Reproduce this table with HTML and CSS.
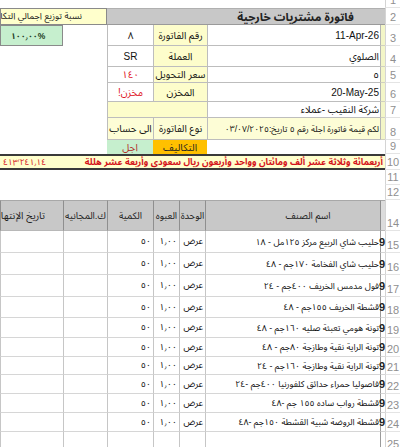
FILE: index.html
```html
<!DOCTYPE html>
<html lang="ar" dir="rtl">
<head>
<meta charset="utf-8">
<title>فاتورة مشتريات خارجية</title>
<link rel="stylesheet" href="styles.css">
</head>
<body>
<div class="sheet">
  <div class="row r1"><div class="rh">1</div><div class="c rest"></div></div>

  <div class="row r2">
    <div class="rh">2</div>
    <div class="c strip gray"></div>
    <div class="c w173 gray title">فاتورة مشتريات خارجية</div>
    <div class="c w100 gray"></div>
    <div class="c w107 ylw ratio">نسبة توزيع اجمالي التكاليف</div>
  </div>

  <div class="row r3">
    <div class="rh">3</div>
    <div class="c strip sy"></div>
    <div class="c w173 val"><span dir="ltr">11-Apr-26</span></div>
    <div class="c w54 lbl">رقم الفاتورة</div>
    <div class="c w46 mid">٨</div>
    <div class="c w44"></div>
    <div class="c w63 green"><span dir="ltr">١٠٠٫٠٠%</span></div>
  </div>

  <div class="row r4">
    <div class="rh">4</div>
    <div class="c strip sy"></div>
    <div class="c w173 val">الصلوي</div>
    <div class="c w54 lbl">العملة</div>
    <div class="c w46 mid">SR</div>
    <div class="c w107"></div>
  </div>

  <div class="row r5">
    <div class="rh">5</div>
    <div class="c strip sy"></div>
    <div class="c w173 val">٥</div>
    <div class="c w54 lbl">سعر التحويل</div>
    <div class="c w46 mid red">١٤٠</div>
    <div class="c w107"></div>
  </div>

  <div class="row r6">
    <div class="rh">6</div>
    <div class="c strip sy"></div>
    <div class="c w173 val"><span dir="ltr">20-May-25</span></div>
    <div class="c w54 lbl">المخزن</div>
    <div class="c w46 mid red">مخزن!</div>
    <div class="c w107"></div>
  </div>

  <div class="row r7">
    <div class="rh">7</div>
    <div class="c strip sy"></div>
    <div class="c w173 val">شركة النقيب -عملاء</div>
    <div class="c w100 lbl"></div>
    <div class="c w107"></div>
  </div>

  <div class="row r8">
    <div class="rh">8</div>
    <div class="c strip sy"></div>
    <div class="c w173 val ly small">لكم قيمة فاتورة اجلة رقم ٥ تاريخ:<span dir="ltr">٠٣/٠٧/٢٠٢٥</span></div>
    <div class="c w54 lbl ly">نوع الفاتورة</div>
    <div class="c w46 mid ly">الى حساب</div>
    <div class="c w107"></div>
  </div>

  <div class="row r9">
    <div class="rh">9</div>
    <div class="c strip"></div>
    <div class="c w173"></div>
    <div class="c w54 orange">التكاليف</div>
    <div class="c w46 gcell">اجل</div>
    <div class="c w107"></div>
  </div>

  <div class="row r10">
    <div class="rh">10</div>
    <div class="c total">
      <span class="words">أربعمائة وثلاثة عشر ألف ومائتان وواحد وأربعون ريال سعودي وأربعة عشر هللة</span>
      <span class="sum" dir="ltr">٤١٣٬٢٤١٫١٤</span>
    </div>
  </div>

  <div class="row r11"><div class="rh">11</div><div class="c rest"></div></div>
  <div class="row r12"><div class="rh">12</div><div class="c rest"></div></div>

  <div class="row r14 head">
    <div class="rh">14</div>
    <div class="c strip"></div>
    <div class="c w175 hname">اسم الصنف</div>
    <div class="c w26">الوحدة</div>
    <div class="c w26">العبوه</div>
    <div class="c w46">الكمية</div>
    <div class="c w44">ك.المجانيه</div>
    <div class="c w63 exp"><span class="tx">تاريخ الإنتهاء</span></div>
  </div>

  <div class="row rd r15">
    <div class="rh">15</div>
    <div class="c strip nine">9</div>
    <div class="c w175 name">حليب شاي الربيع مركز ١٢٥مل - ١٨</div>
    <div class="c w26 num">عرض</div>
    <div class="c w26 num">١٫٠٠</div>
    <div class="c w46 num">٥٠</div>
    <div class="c w44"></div>
    <div class="c w63"></div>
  </div>
  <div class="row rd r16">
    <div class="rh">16</div>
    <div class="c strip nine">9</div>
    <div class="c w175 name">حليب شاي الفخامة ١٧٠جم - ٤٨</div>
    <div class="c w26 num">عرض</div>
    <div class="c w26 num">١٫٠٠</div>
    <div class="c w46 num">٥٠</div>
    <div class="c w44"></div>
    <div class="c w63"></div>
  </div>
  <div class="row rd r17">
    <div class="rh">17</div>
    <div class="c strip nine">9</div>
    <div class="c w175 name">فول مدمس الخريف ٤٠٠جم - ٢٤</div>
    <div class="c w26 num">عرض</div>
    <div class="c w26 num">١٫٠٠</div>
    <div class="c w46 num">٥٠</div>
    <div class="c w44"></div>
    <div class="c w63"></div>
  </div>
  <div class="row rd r18">
    <div class="rh">18</div>
    <div class="c strip nine">9</div>
    <div class="c w175 name">قشطة الخريف ١٥٥جم - ٤٨</div>
    <div class="c w26 num">عرض</div>
    <div class="c w26 num">١٫٠٠</div>
    <div class="c w46 num">٥٠</div>
    <div class="c w44"></div>
    <div class="c w63"></div>
  </div>
  <div class="row rd r19">
    <div class="rh">19</div>
    <div class="c strip nine">9</div>
    <div class="c w175 name">تونة هومي تعبئة صليه ١٦٠جم - ٤٨</div>
    <div class="c w26 num">عرض</div>
    <div class="c w26 num">١٫٠٠</div>
    <div class="c w46 num">٥٠</div>
    <div class="c w44"></div>
    <div class="c w63"></div>
  </div>
  <div class="row rd r20">
    <div class="rh">20</div>
    <div class="c strip nine">9</div>
    <div class="c w175 name">تونة الراية نقية وطازجة ٨٠جم - ٤٨</div>
    <div class="c w26 num">عرض</div>
    <div class="c w26 num">١٫٠٠</div>
    <div class="c w46 num">٥٠</div>
    <div class="c w44"></div>
    <div class="c w63"></div>
  </div>
  <div class="row rd r21">
    <div class="rh">21</div>
    <div class="c strip nine">9</div>
    <div class="c w175 name">تونة الراية نقية وطازجة ١٦٠جم - ٢٤</div>
    <div class="c w26 num">عرض</div>
    <div class="c w26 num">١٫٠٠</div>
    <div class="c w46 num">٥٠</div>
    <div class="c w44"></div>
    <div class="c w63"></div>
  </div>
  <div class="row rd r22">
    <div class="rh">22</div>
    <div class="c strip nine">9</div>
    <div class="c w175 name">فاصوليا حمراء حدائق كلفورنيا ٤٠٠جم -٢٤</div>
    <div class="c w26 num">عرض</div>
    <div class="c w26 num">١٫٠٠</div>
    <div class="c w46 num">٥٠</div>
    <div class="c w44"></div>
    <div class="c w63"></div>
  </div>
  <div class="row rd r23">
    <div class="rh">23</div>
    <div class="c strip nine">9</div>
    <div class="c w175 name">قشطة رواب ساده ١٥٥ جم -٤٨</div>
    <div class="c w26 num">عرض</div>
    <div class="c w26 num">١٫٠٠</div>
    <div class="c w46 num">٥٠</div>
    <div class="c w44"></div>
    <div class="c w63"></div>
  </div>
  <div class="row rd r24">
    <div class="rh">24</div>
    <div class="c strip nine">9</div>
    <div class="c w175 name">قشطة الروضة شبية القشطة ١٥٠جم -٤٨</div>
    <div class="c w26 num">عرض</div>
    <div class="c w26 num">١٫٠٠</div>
    <div class="c w46 num">٥٠</div>
    <div class="c w44"></div>
    <div class="c w63"></div>
  </div>
  <div class="row rd r25">
    <div class="rh">25</div>
    <div class="c strip"></div>
    <div class="c w175"></div>
    <div class="c w26"></div>
    <div class="c w26"></div>
    <div class="c w46"></div>
    <div class="c w44"></div>
    <div class="c w63"></div>
  </div>
</div>
</body>
</html>
```

FILE: styles.css
```css
* { box-sizing: border-box; margin: 0; padding: 0; }

html, body {
  width: 400px;
  height: 447px;
  overflow: hidden;
  background: #fff;
}

body {
  font-family: "Liberation Sans", "Noto Sans Arabic", "Noto Naskh Arabic", "DejaVu Sans Condensed", "DejaVu Sans", sans-serif;
  font-size: 9.5px;
  color: #111;
}

.sheet {
  direction: rtl;
  display: flex;
  flex-direction: column;
  width: 400px;
}

.row { display: flex; flex: none; }

.r1 { height: 8px; }
.r2 { height: 17px; }
.r3 { height: 21px; }
.r4 { height: 21px; }
.r5 { height: 16px; }
.r6 { height: 19px; }
.r7 { height: 16px; }
.r8 { height: 22px; }
.r9 { height: 14px; }
.r10 { height: 16px; }
.r11 { height: 15px; }
.r12 { height: 15px; }
.r14 { height: 31px; }
.r15, .r16, .r17 { height: 22px; }
.r18 { height: 21px; }
.r19 { height: 20px; }
.r20, .r22, .r23, .r24 { height: 19px; }
.r21 { height: 18px; }
.r25 { height: 20px; }

/* row header column */
.rh {
  width: 15px;
  flex: none;
  display: flex;
  align-items: flex-end;
  justify-content: center;
  padding-bottom: 1px;
  font-size: 11px;
  line-height: 11px;
  color: #8f8f8f;
  border-bottom: 1px solid #e4e4e4;
  border-left: 1px solid #d4d4d4;
  background: #fff;
  overflow: hidden;
}

/* cells */
.c {
  flex: none;
  height: 100%;
  display: flex;
  align-items: center;
  overflow: hidden;
  white-space: nowrap;
}

.tx { flex: none; }

.rest { flex: 1; }

.strip { width: 5px; }
.w173 { width: 173px; }
.w175 { width: 175px; }
.w100 { width: 100px; }
.w107 { width: 107px; }
.w54 { width: 54px; }
.w46 { width: 46px; }
.w44 { width: 44px; }
.w63 { width: 63px; }
.w26 { width: 26px; }

.gray { background: #c8c8c8; }

.title {
  justify-content: center;
  padding-left: 4px;
  font-weight: bold;
  font-size: 11.5px;
  color: #222;
}

.r2 .gray { border-top: 1px solid #b0b0b0; border-bottom: 1px solid #9a9a9a; }

.ylw { background: #ffffcc; }

.ratio {
  border: 1px solid #8a8a8a;
  padding-right: 24px;
  font-size: 9px;
  color: #222;
}

.sy {
  background: #f3f6c8;
  border-left: 1px solid #b5b5b5;
  border-bottom: 1px solid #d0d0c0;
}

.val {
  padding-right: 1px;
  font-size: 10px;
  border-bottom: 1px solid #bdbdbd;
  border-left: 1px solid #bdbdbd;
  background: #fff;
}

.val.small { font-size: 8.6px; }

.lbl {
  justify-content: center;
  font-size: 10px;
  background: #fdfdcb;
  border-bottom: 1px solid #bdbdbd;
  border-left: 1px solid #bdbdbd;
}

.mid {
  justify-content: center;
  font-size: 10px;
  background: #fff;
  border-bottom: 1px solid #bdbdbd;
  border-left: 1px solid #bdbdbd;
}

.ly { background: #fdfdd6; }

.red { color: #e0141e; }

.green {
  background: #c6efce;
  border: 1px solid #8a8a8a;
  justify-content: flex-end;
  padding-left: 10px;
  font-size: 8.5px;
  font-weight: bold;
  color: #1d3b1d;
}

.orange {
  justify-content: center;
  background: #ffc000;
  font-size: 10px;
  color: #222;
}

.gcell {
  justify-content: center;
  background: #c6efce;
  font-size: 10px;
  color: #b2302a;
}

.total {
  width: 385px;
  background: #ffffcc;
  border-top: 2px solid #3a3a3a;
  border-bottom: 2px solid #3a3a3a;
  justify-content: space-between;
  padding: 0 2px 0 3px;
  color: #d3121a;
}

.words {
  font-weight: bold;
  font-size: 9px;
}

.sum { font-size: 8.5px; }

/* table header */
.head .c {
  background: #c8c8c8;
  justify-content: center;
  border-left: 1px solid #8f8f8f;
  border-top: 1px solid #a8a8a8;
  border-bottom: 1px solid #b8b8b8;
  color: #222;
}

.head .strip { background: #dcdcdc; }

.head .hname { padding-left: 30px; }

.head .exp { justify-content: flex-start; padding-right: 18px; font-size: 10px; }

/* data rows */
.rd .c {
  border-left: 1px solid #c6c6c6;
  border-bottom: 1px solid #d6d6d6;
}

.rd .strip { border-left: 1px solid #9a9a9a; }

.nine {
  overflow: visible;
  justify-content: flex-start;
  font-weight: bold;
  font-size: 11px;
  color: #222;
}

.name { padding-right: 1px; font-size: 8.8px; color: #111; }

.num { justify-content: flex-start; padding-right: 2px; font-size: 9px; }
```
